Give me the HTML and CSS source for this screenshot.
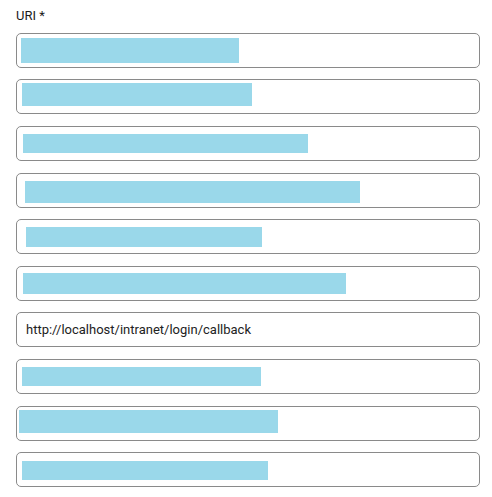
FILE: index.html
```html
<!DOCTYPE html>
<html>
<head>
<meta charset="utf-8">
<link rel="stylesheet" href="styles.css">
</head>
<body>
<div class="field">
  <div class="label">URI *</div>
  <div class="list">
    <div class="box"><span class="redact" style="margin-left:4px;margin-top:4px;width:218px;height:25px"></span></div>
    <div class="box"><span class="redact" style="margin-left:5px;margin-top:2.7px;width:230px;height:23.3px"></span></div>
    <div class="box"><span class="redact" style="margin-left:6px;margin-top:7.3px;width:285px;height:18.7px"></span></div>
    <div class="box"><span class="redact" style="margin-left:8px;margin-top:7.3px;width:335px;height:22px"></span></div>
    <div class="box"><span class="redact" style="margin-left:9px;margin-top:6.4px;width:236px;height:20px"></span></div>
    <div class="box"><span class="redact" style="margin-left:6px;margin-top:5.7px;width:323px;height:21.3px"></span></div>
    <div class="box text">http://localhost/intranet/login/callback</div>
    <div class="box"><span class="redact" style="margin-left:5px;margin-top:7px;width:239px;height:19px"></span></div>
    <div class="box"><span class="redact" style="margin-left:2px;margin-top:3px;width:259px;height:23px"></span></div>
    <div class="box"><span class="redact" style="margin-left:5px;margin-top:7.7px;width:246px;height:19px"></span></div>
  </div>
</div>
</body>
</html>
```
FILE: styles.css
```css
html, body {
  margin: 0;
  padding: 0;
  background: #ffffff;
}
body {
  font-family: Roboto, "Liberation Sans", Arial, sans-serif;
  color: #212121;
}
.field {
  padding: 0 12px 0 16px;
}
.label {
  height: 32.7px;
  box-sizing: border-box;
  padding-top: 8px;
  font-size: 13px;
  line-height: 16px;
  font-weight: 400;
  color: #1a1a1a;
}
.list {
  display: flex;
  flex-direction: column;
  gap: 11.63px;
}
.box {
  height: 35px;
  box-sizing: border-box;
  border: 1px solid #8a8a8a;
  border-radius: 5px;
  display: flex;
  align-items: flex-start;
  overflow: hidden;
}
.redact {
  display: block;
  flex: none;
  background: #9ad8ea;
}
.box.text {
  align-items: center;
  padding-left: 9px;
  font-size: 13px;
  color: #222222;
}
```
